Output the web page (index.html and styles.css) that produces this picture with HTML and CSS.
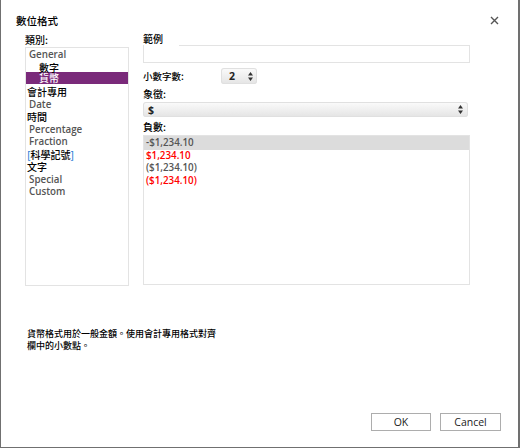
FILE: index.html
```html
<!DOCTYPE html>
<html lang="zh-Hant">
<head>
  <meta charset="UTF-8">
  <title>數位格式</title>
  <link rel="stylesheet" href="styles.css">
</head>
<body>

<div class="dialog">
  <!-- Title bar -->
  <div class="titlebar">
    <span class="title">數位格式</span>
    <svg class="close" width="9" height="9" viewBox="0 0 9 9">
      <path d="M1 1 L8 8 M8 1 L1 8" stroke="#555" stroke-width="1.4"/>
    </svg>
  </div>

  <div class="content">
    <!-- Category list -->
    <div class="left-col">
      <div class="label">類別:</div>
      <div class="category-list">
        <div class="item en">General</div>
        <div class="item indent">數字</div>
        <div class="item indent selected">貨幣</div>
        <div class="item flush">會計專用</div>
        <div class="item en">Date</div>
        <div class="item flush">時間</div>
        <div class="item en">Percentage</div>
        <div class="item en">Fraction</div>
        <div class="item flush"><span class="bracket">[</span>科學記號<span class="bracket">]</span></div>
        <div class="item flush">文字</div>
        <div class="item en">Special</div>
        <div class="item en">Custom</div>
      </div>
    </div>

    <!-- Options -->
    <div class="right-col">
      <div class="label sample-label">範例</div>
      <div class="sample"></div>

      <div class="decimal-row">
        <span class="label">小數字數:</span>
        <div class="spinner">
          <span>2</span>
          <svg width="5" height="9" viewBox="0 0 5 9">
            <path d="M2.5 0 L5 3.5 L0 3.5 Z M2.5 9 L5 5.5 L0 5.5 Z" fill="#333"/>
          </svg>
        </div>
      </div>

      <div class="label symbol-label">象徵:</div>
      <div class="select">
        <span>$</span>
        <svg width="5" height="9" viewBox="0 0 5 9">
          <path d="M2.5 0 L5 3.5 L0 3.5 Z M2.5 9 L5 5.5 L0 5.5 Z" fill="#333"/>
        </svg>
      </div>

      <div class="label neg-label">負數:</div>
      <div class="neg-list">
        <div class="neg selected">-$1,234.10</div>
        <div class="neg red">$1,234.10</div>
        <div class="neg">($1,234.10)</div>
        <div class="neg red">($1,234.10)</div>
      </div>
    </div>
  </div>

  <p class="description">貨幣格式用於一般金額。使用會計專用格式對齊<br>欄中的小數點。</p>

  <div class="footer">
    <button class="btn">OK</button>
    <button class="btn">Cancel</button>
  </div>
</div>

</body>
</html>
```

FILE: styles.css
```css
* {
  margin: 0;
  padding: 0;
  box-sizing: border-box;
}
body {
  font-family: "Noto Sans CJK TC", sans-serif;
  font-weight: 500;
  background-color: #fff;
  color: #000;
}
.dialog {
  width: 520px;
  height: 448px;
  display: flex;
  flex-direction: column;
  border-left: 1px solid #707070;
  border-right: 2px solid #707070;
  border-bottom: 1px solid #707070;
  background-color: #fff;
}
.titlebar {
  display: flex;
  align-items: center;
  justify-content: space-between;
  height: 33px;
  padding: 7px 19px 0 15px;
}
.title {
  font-size: 10.5px;
  line-height: 13px;
}
.close {
  display: block;
}
.content {
  display: flex;
  padding-left: 24px;
}
.label {
  font-size: 10px;
  line-height: 14px;
}
.left-col {
  width: 104px;
}
.category-list {
  height: 239px;
  padding-top: 1px;
  border: 1px solid #e3e3e3;
}
.item {
  font-size: 10px;
  line-height: 12.5px;
  height: 12.5px;
  padding-left: 1px;
  white-space: nowrap;
}
.item.en {
  font-family: "Open Sans", "Noto Sans", sans-serif;
  font-size: 9.8px;
  font-weight: 600;
  color: #555;
  padding-left: 3px;
}
.item.indent {
  padding-left: 13px;
}
.item.selected {
  background-color: #7a2a7a;
  color: #fff;
  margin-top: -2px;
  height: 12px;
  margin-bottom: 2px;
}
.bracket {
  color: #2a7bd5;
}
.right-col {
  width: 327px;
  margin-left: 14px;
}
.sample-label {
  height: 12px;
  line-height: 11px;
}
.sample {
  height: 18px;
  border: 1px solid #e3e3e3;
  border-top: 0;
  background: linear-gradient(to right, #fff 35px, #e3e3e3 35px) top left / 100% 1px no-repeat;
}
.decimal-row {
  display: flex;
  align-items: center;
  height: 16px;
  margin-top: 5px;
}
.decimal-row .label {
  width: 78px;
  font-size: 9.5px;
}
.spinner,
.select {
  display: flex;
  align-items: center;
  justify-content: space-between;
  height: 16px;
  border-radius: 3px;
  background: linear-gradient(#fbfbfb, #e4e4e4);
  box-shadow: inset 0 0 0 1px #e0e0e0;
  font-family: "Open Sans", "Noto Sans", sans-serif;
  font-size: 10.5px;
  font-weight: 700;
  color: #222;
}
.spinner {
  width: 36px;
  padding: 0 4px 0 8px;
}
.select {
  width: 325px;
  height: 15px;
  padding: 0 5px 0 5px;
}
.symbol-label {
  margin-top: 2px;
  height: 16px;
  line-height: 16px;
}
.neg-label {
  margin-top: 3px;
  height: 15px;
}
.neg-list {
  height: 150px;
  border: 1px solid #e3e3e3;
}
.neg {
  font-family: "Open Sans", "Noto Sans", sans-serif;
  font-size: 9.8px;
  font-weight: 600;
  line-height: 12.3px;
  height: 12.3px;
  padding-left: 2px;
  color: #555;
}
.neg.selected {
  background-color: #dcdcdc;
  height: 14px;
  line-height: 14px;
}
.neg.red {
  color: #f00;
}
.description {
  font-size: 9px;
  line-height: 12px;
  margin-top: 42px;
  padding-left: 26px;
}
.footer {
  display: flex;
  justify-content: flex-end;
  gap: 9px;
  margin-top: auto;
  padding: 0 17px 16px 0;
}
.btn {
  width: 60px;
  height: 18px;
  border: 1px solid #adadad;
  background-color: #fff;
  font-family: "Open Sans", "Noto Sans", sans-serif;
  font-size: 10.5px;
  color: #222;
}
.btn + .btn {
  width: 61px;
}
```
